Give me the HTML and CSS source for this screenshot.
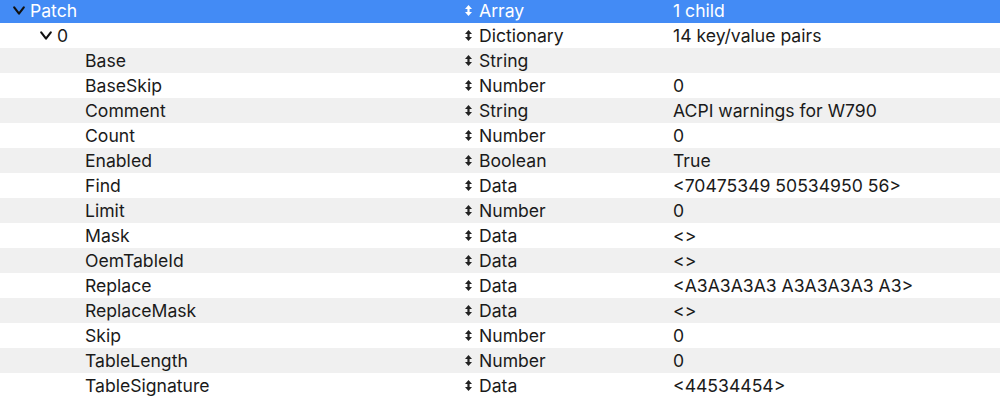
FILE: index.html
```html
<!DOCTYPE html>
<html lang="en">
<head>
  <meta charset="UTF-8">
  <title>Patch</title>
  <link rel="stylesheet" href="styles.css">
</head>
<body>
  <div class="outline">
    <div class="row selected">
      <div class="key depth-0"><span class="chevron"><svg width="12" height="9" viewBox="0 0 12 9"><path d="M1.2 1.3 L6 7.6 L10.8 1.3" fill="none" stroke="#111" stroke-width="2.1" stroke-linecap="round" stroke-linejoin="round"/></svg></span>Patch</div>
      <div class="type"><span class="updown"><svg width="7" height="11" viewBox="0 0 7 11"><path d="M3.5 0 L7 4 H0 Z M3.5 11 L0 7 H7 Z M2.4 3.5 H4.6 V7.5 H2.4 Z" fill="currentColor"/></svg></span>Array</div>
      <div class="value">1 child</div>
    </div>
    <div class="row">
      <div class="key depth-1"><span class="chevron"><svg width="12" height="9" viewBox="0 0 12 9"><path d="M1.2 1.3 L6 7.6 L10.8 1.3" fill="none" stroke="#111" stroke-width="2.1" stroke-linecap="round" stroke-linejoin="round"/></svg></span>0</div>
      <div class="type"><span class="updown"><svg width="7" height="11" viewBox="0 0 7 11"><path d="M3.5 0 L7 4 H0 Z M3.5 11 L0 7 H7 Z M2.4 3.5 H4.6 V7.5 H2.4 Z" fill="currentColor"/></svg></span>Dictionary</div>
      <div class="value">14 key/value pairs</div>
    </div>
  </div>

  <script>
    const items = [
      ["Base", "String", ""],
      ["BaseSkip", "Number", "0"],
      ["Comment", "String", "ACPI warnings for W790"],
      ["Count", "Number", "0"],
      ["Enabled", "Boolean", "True"],
      ["Find", "Data", "<70475349 50534950 56>"],
      ["Limit", "Number", "0"],
      ["Mask", "Data", "<>"],
      ["OemTableId", "Data", "<>"],
      ["Replace", "Data", "<A3A3A3A3 A3A3A3A3 A3>"],
      ["ReplaceMask", "Data", "<>"],
      ["Skip", "Number", "0"],
      ["TableLength", "Number", "0"],
      ["TableSignature", "Data", "<44534454>"]
    ];

    const updown = '<span class="updown"><svg width="7" height="11" viewBox="0 0 7 11"><path d="M3.5 0 L7 4 H0 Z M3.5 11 L0 7 H7 Z M2.4 3.5 H4.6 V7.5 H2.4 Z" fill="currentColor"/></svg></span>';
    const esc = s => s.replace(/&/g, "&amp;").replace(/</g, "&lt;").replace(/>/g, "&gt;");

    document.querySelector(".outline").insertAdjacentHTML("beforeend", items.map(([key, type, value]) => `
      <div class="row">
        <div class="key depth-2">${key}</div>
        <div class="type">${updown}${type}</div>
        <div class="value">${esc(value)}</div>
      </div>
    `).join(""));
  </script>
</body>
</html>
```

FILE: styles.css
```css
body {
  margin: 0;
  background: #fff;
  font-family: Inter, "Noto Sans", sans-serif;
  font-size: 17.6px;
  color: #1a1a1a;
  overflow: hidden;
}

.outline {
  margin-top: -2px;
}

.row {
  display: grid;
  grid-template-columns: 455px 205px 1fr;
  height: 25px;
  line-height: 25px;
  white-space: nowrap;
}

.row:nth-child(odd) {
  background: #f0f0f0;
}

.row.selected {
  background: #438bf5;
  color: #fff;
}

.key {
  display: flex;
  align-items: center;
}

.depth-0 {
  padding-left: 13px;
}

.depth-1 {
  padding-left: 40px;
}

.depth-2 {
  padding-left: 85px;
}

.chevron {
  display: inline-flex;
  width: 17px;
  height: 25px;
  align-items: center;
}

.type {
  display: flex;
  align-items: center;
  padding-left: 10px;
}

.updown {
  display: inline-flex;
  width: 14px;
  color: #222;
}

.selected .updown {
  color: #fff;
}

.value {
  padding-left: 13px;
}
```
